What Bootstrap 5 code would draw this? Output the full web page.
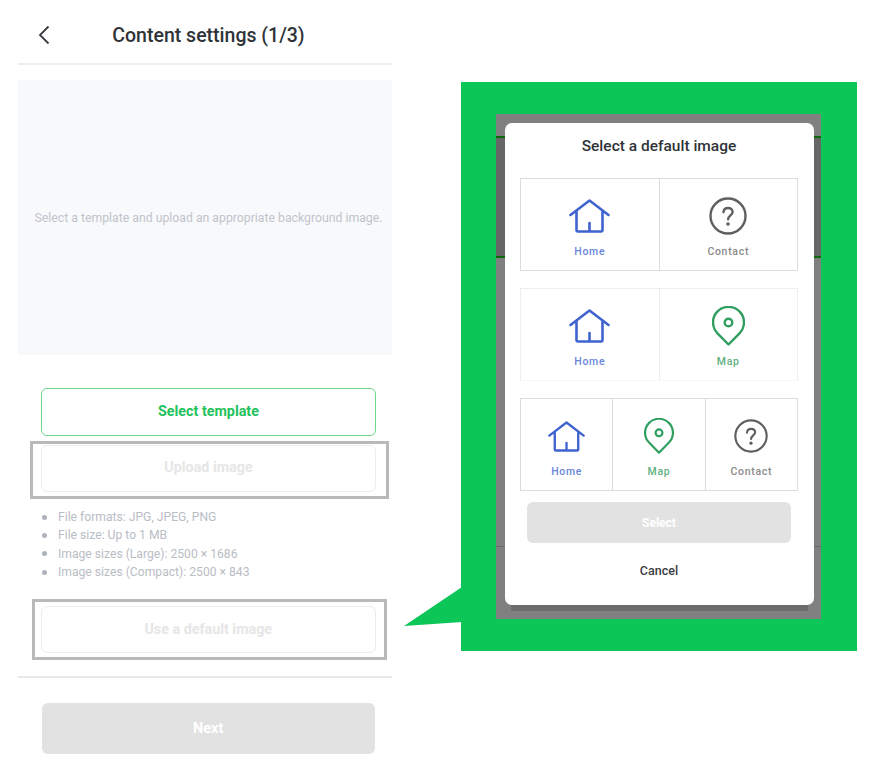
<!DOCTYPE html>
<html lang="en">
<head>
<meta charset="utf-8">
<title>Content settings</title>
<link href="https://cdn.jsdelivr.net/npm/bootstrap@5.3.0/dist/css/bootstrap.min.css" rel="stylesheet">
<style>
body{font-family:Roboto,"Liberation Sans",sans-serif;background:#fff;color:#2f3338;overflow:hidden}
.shot{width:871px;height:762px;padding-left:18px}
.phone{width:374px;flex:none}
.head{height:65px;border-bottom:2px solid #eeeeee;position:relative}
.head-title{font-size:19.5px;font-weight:500;line-height:24px;margin:0;padding:24px 0 0 7px;text-align:center}
.back{position:absolute;left:20px;top:25px;width:12px;height:20px}
.hero{height:275px;margin-top:15px;padding:2px 0 0 7px;background:#f8f9fb;color:#c1c4cc;font-size:12.25px}
.actions{padding:33px 16px 0 23px}
.ln{display:block;width:100%;height:47.5px;font-size:14.3px;font-weight:700;border-radius:6px;background:#fff;padding:0 0 1.5px;line-height:1}
.ln-on{border:1.5px solid #6fd58c;color:#1fc25b}
.ln-off,.ln-off:disabled{border:1.5px solid #ececec;color:#e6e6e6;opacity:1;background:#fff}
.hl-a{border:3px solid #b9b9b9;margin:5px -13px 0 -11px;padding:1px 10px 3px 8px;height:58px}
.hl-b{border:3px solid #b9b9b9;margin:17.500px -11px 0 -9px;padding:4px 8.5px 0 6px;height:61px}
.specs{margin:9.500px 0 0;font-size:12.15px;line-height:18.35px;color:#b9bdc5}
.specs li::before{content:"";flex:none;width:5px;height:5px;border-radius:50%;background:#aeb2bb;margin:0 11.500px 0 .5px}
.rule2{border-top:2px solid #e9e9e9;margin-top:16px}
.next-wrap{padding:25px 17px 0 23.5px}
.fill,.fill:disabled{display:block;width:100%;background:#e2e2e2;color:#fff;border:0;border-radius:6px;font-weight:700;opacity:1;padding:0}
.next{height:51px;font-size:14.5px}
.panel{width:396px;height:569px;background:#0cc658;margin:82px 0 0 69px;padding:32px 36px 32px 35px;position:relative;flex:none}
.tail{position:absolute;left:-57px;top:505px;width:58px;height:40px}
.dim{height:505px;background:#808080;position:relative;padding:9px 7px 0 9px}
.band{position:absolute;left:0;right:0;top:22px;height:122px;background:#666;border-top:2px solid #0a6a0a;border-bottom:2px solid #0a6a0a}
.line3{position:absolute;left:0;right:0;top:432px;border-top:1px solid #6a6a6a}
.sheet{position:relative;height:482px;background:#fff;border-radius:7px;padding:0 16px 0 15px;box-shadow:0 12px 0 -6px #6c6c6c}
.sheet-title{font-size:15.5px;font-weight:500;line-height:20px;margin:0;padding-top:12.5px;height:55px;text-align:center}
.tiles{height:93px;border:1.5px solid #dcdcdc;margin-bottom:17px}
.tiles.soft{border-color:#eeeeee;border-bottom-color:#f7f7f7}
.tiles.soft .tile+.tile{border-left-color:#eeeeee}
.tile{height:100%;padding-top:17px;text-align:center}
.tile+.tile{border-left:1.5px solid #dcdcdc}
.ico{height:40px}
.big-home{width:41px;height:34px}
.big-q{width:38px;height:38px}
.big-pin{width:33px;height:40px}
.sm-home{width:37px;height:31px}
.sm-pin{width:30px;height:36px}
.sm-q{width:34px;height:34px}
.cap{font-size:10.5px;font-weight:500;line-height:14px;margin-top:9px;letter-spacing:.7px}
.c-home{color:#6a86d9}
.c-q{color:#8a8a8a}
.c-map{color:#5fb080}
.sheet-btn{padding:0 7px 0 7px;margin-top:-6px}
.select{height:41px;font-size:12px;border-radius:4px;background:#e3e3e3}
.cancel{font-size:12.5px;font-weight:500;padding:0;border:0;background:none;color:#3a3d42;display:block;width:100%;margin-top:20px;line-height:16px}
.s-home{fill:none;stroke:#3f63cf;stroke-width:2.6;stroke-linecap:round;stroke-linejoin:round}
.s-q{fill:none;stroke:#5f5f5f;stroke-width:2.4;stroke-linecap:round;stroke-linejoin:round}
.s-pin{fill:none;stroke:#2f9e5f;stroke-width:2.4;stroke-linejoin:round}
.f-q{fill:#5f5f5f}
</style>
</head>
<body class="m-0">
<svg width="0" height="0" class="position-absolute">
  <symbol id="i-home" viewBox="0 0 41 34"><path class="s-home" d="M1.500 16 20.500 1.500 39.500 16M7.500 12V31Q7.500 32.500 9 32.500H32Q33.500 32.500 33.500 31V12M20.500 24V32.500"/></symbol>
  <symbol id="i-q" viewBox="0 0 38 38"><circle class="s-q" cx="19" cy="19" r="17.500"/><path class="s-q" d="M14.500 15.200C14.700 12.500 16.500 11 19.100 11 21.800 11 23.600 12.700 23.600 14.900 23.600 18.200 19.100 18.500 19.100 22.300"/><circle class="f-q" cx="19" cy="27" r="1.800"/></symbol>
  <symbol id="i-pin" viewBox="0 0 33 40"><path class="s-pin" d="M16.500 38.500 5.500 27.300A15.500 15.500 0 1 1 27.500 27.300Z"/><circle class="s-pin" cx="16.500" cy="16.500" r="3.800"/></symbol>
</svg>
<div class="shot d-flex">
  <div class="phone">
    <div class="head">
      <svg class="back" viewBox="0 0 12 20"><path d="M10.500 1.500 2 10 10.500 18.500" fill="none" stroke="#3a3d42" stroke-width="1.800"/></svg>
      <h1 class="head-title">Content settings (1/3)</h1>
    </div>
    <div class="hero d-flex align-items-center justify-content-center">Select a template and upload an appropriate background image.</div>
    <div class="actions">
      <button type="button" class="btn ln ln-on">Select template</button>
      <div class="hl-a"><button type="button" class="btn ln ln-off" disabled>Upload image</button></div>
      <ul class="specs list-unstyled">
        <li class="d-flex align-items-center">File formats: JPG, JPEG, PNG</li>
        <li class="d-flex align-items-center">File size: Up to 1 MB</li>
        <li class="d-flex align-items-center">Image sizes (Large): 2500 × 1686</li>
        <li class="d-flex align-items-center">Image sizes (Compact): 2500 × 843</li>
      </ul>
      <div class="hl-b"><button type="button" class="btn ln ln-off" disabled>Use a default image</button></div>
    </div>
    <div class="rule2"></div>
    <div class="next-wrap"><button type="button" class="btn fill next" disabled>Next</button></div>
  </div>
  <div class="panel">
    <svg class="tail" viewBox="0 0 58 40"><polygon points="0,39 58,0 58,35" fill="#0cc658"/></svg>
    <div class="dim">
      <div class="band"></div>
      <div class="line3"></div>
      <div class="sheet">
        <h2 class="sheet-title">Select a default image</h2>
        <div class="tiles row g-0">
          <div class="col tile c-home"><div class="ico d-flex align-items-center justify-content-center"><svg class="big-home"><use href="#i-home"/></svg></div><div class="cap">Home</div></div>
          <div class="col tile c-q"><div class="ico d-flex align-items-center justify-content-center"><svg class="big-q"><use href="#i-q"/></svg></div><div class="cap">Contact</div></div>
        </div>
        <div class="tiles soft row g-0">
          <div class="col tile c-home"><div class="ico d-flex align-items-center justify-content-center"><svg class="big-home"><use href="#i-home"/></svg></div><div class="cap">Home</div></div>
          <div class="col tile c-map"><div class="ico d-flex align-items-center justify-content-center"><svg class="big-pin"><use href="#i-pin"/></svg></div><div class="cap">Map</div></div>
        </div>
        <div class="tiles row g-0">
          <div class="col tile c-home"><div class="ico d-flex align-items-center justify-content-center"><svg class="sm-home"><use href="#i-home"/></svg></div><div class="cap">Home</div></div>
          <div class="col tile c-map"><div class="ico d-flex align-items-center justify-content-center"><svg class="sm-pin"><use href="#i-pin"/></svg></div><div class="cap">Map</div></div>
          <div class="col tile c-q"><div class="ico d-flex align-items-center justify-content-center"><svg class="sm-q"><use href="#i-q"/></svg></div><div class="cap">Contact</div></div>
        </div>
        <div class="sheet-btn"><button type="button" class="btn fill select" disabled>Select</button></div>
        <button type="button" class="btn cancel">Cancel</button>
      </div>
    </div>
  </div>
</div>
</body>
</html>
